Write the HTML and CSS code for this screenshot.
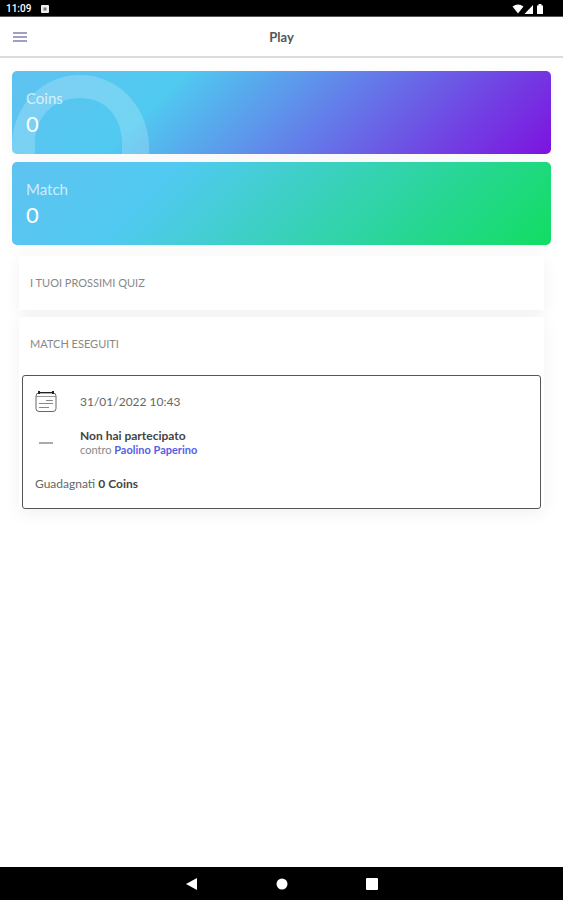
FILE: index.html
```html
<!DOCTYPE html>
<html lang="it">
<head>
<meta charset="utf-8">
<meta name="viewport" content="width=device-width, initial-scale=1">
<title>Play</title>
<link rel="stylesheet" href="styles.css">
</head>
<body>
<div class="status">
  <span class="clock">11:09</span>
  <svg class="notice" viewBox="0 0 8 8" aria-hidden="true"><rect width="8" height="8" rx="1" fill="#eee"/><path d="M2.5 2.5h3v3h-3z" fill="#777"/></svg>
  <svg class="signals" viewBox="0 0 34 12" aria-hidden="true" fill="#fff"><path d="M.5 3.500Q6 -.5 11.500 3.500L6 10.500z"/><path d="M12.500 11L21 2v9z"/><path d="M26.500 2.500V1h3v1.500h1.500V11h-6V2.500z"/></svg>
</div>
<header class="toolbar">
  <button class="menu" type="button" aria-label="Menu"><svg viewBox="0 0 14 10"><path d="M0 1h14M0 5h14M0 9h14" stroke="#a29fc6" stroke-width="2"/></svg></button>
  <h1 class="title">Play</h1>
</header>
<main class="content">
  <section class="stat coins">
    <svg class="ring" viewBox="0 0 137 79" aria-hidden="true"><path d="M0 79V68C2 28 32 0 68 0S134 28 137 68V79H110V65C108 38 91 23 68 23S25 38 23 65V79z" fill="#fff" fill-opacity=".2"/></svg>
    <h2 class="stat-name">Coins</h2>
    <p class="stat-value">0</p>
  </section>
  <section class="stat match">
    <h2 class="stat-name">Match</h2>
    <p class="stat-value">0</p>
  </section>
  <section class="panel">
    <h2 class="panel-title">I TUOI PROSSIMI QUIZ</h2>
  </section>
  <section class="panel">
    <h2 class="panel-title">MATCH ESEGUITI</h2>
    <article class="game">
      <div class="row date">
        <svg class="calendar" viewBox="0 0 22 22" aria-hidden="true" fill="none" stroke="#666"><rect x="1" y="2" width="20" height="18.500" rx="3"/><path d="M1 5.500h20" stroke="#999"/><path d="M3 1.500h16" stroke="#222"/><path d="M4 0v3M18 0v3" stroke="#222" stroke-width="2"/><path d="M11 9.500h7M4 12.500h14M4 16.500h10" stroke="#888"/></svg>
        <time datetime="2022-01-31T10:43">31/01/2022 10:43</time>
      </div>
      <div class="row result">
        <span class="dash"></span>
        <div>
          <p class="outcome">Non hai partecipato</p>
          <p class="rival">contro <b>Paolino Paperino</b></p>
        </div>
      </div>
      <p class="earned">Guadagnati <b>0 Coins</b></p>
    </article>
  </section>
</main>
<nav class="system">
  <button type="button" aria-label="Indietro"><svg viewBox="0 0 12 12"><path d="M0 6L11 0v12z"/></svg></button>
  <button type="button" aria-label="Home"><svg viewBox="0 0 12 12"><circle cx="6" cy="6" r="5.500"/></svg></button>
  <button type="button" aria-label="Recenti"><svg viewBox="0 0 12 12"><rect width="12" height="12" rx="1"/></svg></button>
</nav>
</body>
</html>
```
FILE: styles.css
```css
* {
  box-sizing: border-box;
}

body {
  margin: 0;
  min-height: 100vh;
  display: flex;
  flex-direction: column;
  background: #fff;
  color: #444;
  font-family: Lato, "Liberation Sans", sans-serif;
}

h1, h2, p {
  margin: 0;
  font-weight: 400;
}

button {
  display: grid;
  place-items: center;
  padding: 0;
  border: 0;
  background: none;
}

svg {
  display: block;
}

.status {
  display: flex;
  align-items: center;
  gap: 10px;
  height: 17px;
  padding: 1px 17px 0 6px;
  background: #000;
  border-bottom: 1px solid #555;
  color: #fff;
  font: 500 10px/12px Roboto, sans-serif;
}

.notice {
  width: 8px;
  height: 8px;
}

.signals {
  width: 34px;
  height: 12px;
  margin-left: auto;
}

.toolbar {
  display: grid;
  grid-template-columns: 40px 1fr 40px;
  align-items: center;
  height: 41px;
  border-bottom: 2px solid #dcdcdc;
}

.menu {
  height: 39px;
}

.menu svg {
  width: 14px;
  height: 10px;
}

.title {
  text-align: center;
  font-size: 13px;
  line-height: 18px;
  font-weight: 700;
  color: #555;
}

.content {
  flex: 1;
  padding: 13px 12px;
}

.stat {
  position: relative;
  overflow: hidden;
  padding: 17px 14px 14px;
  margin-bottom: 8px;
  border-radius: 5px;
  color: #fff;
  box-shadow: 0 2px 14px rgba(0, 0, 0, .04);
}

.coins {
  background: linear-gradient(135deg, #5fc2f0 0%, #50caf0 28%, #7d12df 100%);
}

.match {
  background: linear-gradient(135deg, #5fc2f0 0%, #50caf0 28%, #12dd62 100%);
}

.ring {
  position: absolute;
  left: 0;
  bottom: 0;
  width: 137px;
  height: 79px;
}

.stat-name {
  position: relative;
  font-size: 15px;
  line-height: 20px;
  opacity: .7;
}

.stat-value {
  position: relative;
  font-size: 22px;
  line-height: 32px;
}

.panel {
  margin: 0 7px 7px;
  padding: 17px 3px 0;
  background: #fff;
  box-shadow: 0 4px 16px rgba(0, 0, 0, .06);
}

.stat + .panel {
  margin-top: 11px;
}

.panel-title {
  padding: 0 8px 17px;
  font-size: 11px;
  line-height: 20px;
  color: #888;
}

.game {
  margin-top: 4px;
  padding: 15px 12px 14px;
  border: 1px solid #555;
  border-radius: 3px;
}

.row {
  display: grid;
  grid-template-columns: 22px 1fr;
  column-gap: 23px;
  align-items: center;
}

.date {
  font-size: 12px;
  line-height: 22px;
  color: #666;
}

.calendar {
  width: 22px;
  height: 22px;
}

.result {
  margin-top: 15px;
}

.dash {
  justify-self: center;
  width: 14px;
  height: 2px;
  background: #aaa;
}

.outcome {
  font-size: 12px;
  line-height: 15px;
  font-weight: 700;
}

.rival {
  font-size: 11px;
  line-height: 14px;
  color: #888;
}

.rival b {
  color: #5560e8;
}

.earned {
  margin-top: 17px;
  font-size: 12px;
  line-height: 20px;
  color: #666;
}

.earned b {
  color: #444;
}

.system {
  display: flex;
  justify-content: center;
  gap: 78px;
  height: 33px;
  background: #000;
}

.system svg {
  width: 12px;
  height: 12px;
  fill: #fff;
}
```
